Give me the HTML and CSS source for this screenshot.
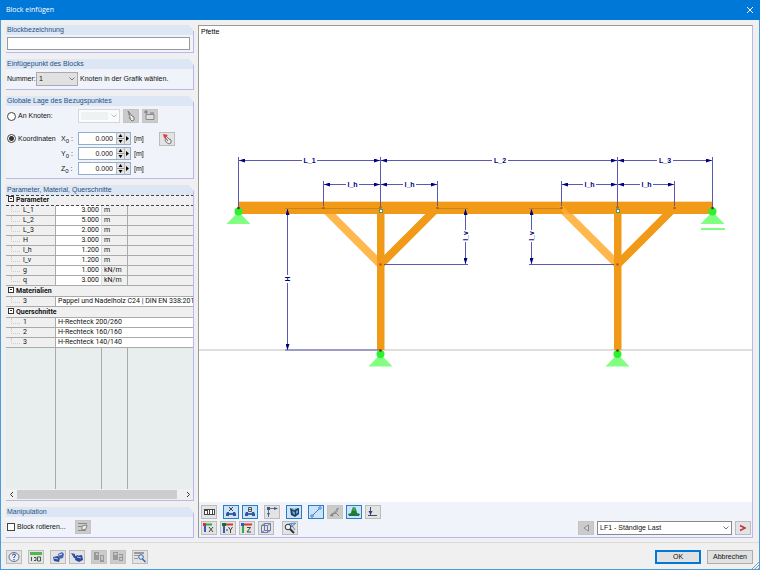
FILE: index.html
```html
<!DOCTYPE html>
<html lang="de">
  <head>
    <meta charset="UTF-8" />
    <meta name="viewport" content="width=device-width, initial-scale=1.0" />
    <title>Block einfügen</title>
    <link rel="stylesheet" href="styles.css">
  </head>
  <body>
    <div class="dialog">
      <header class="titlebar">
        <h1>Block einfügen</h1>
        <button type="button" class="close" aria-label="Schließen">
          <svg width="8" height="8" viewBox="0 0 8 8"><path d="M1 1l6 6M7 1L1 7" stroke="#fff" /></svg>
        </button>
      </header>

      <main class="content">
        <form class="sidebar">
          <section class="panel">
            <h2><label for="bezeichnung">Blockbezeichnung</label></h2>
            <div class="panel-body name-body">
              <input type="text" id="bezeichnung" name="bezeichnung" />
            </div>
          </section>

          <section class="panel">
            <h2>Einfügepunkt des Blocks</h2>
            <div class="panel-body row">
              <label for="nummer" class="nummer-label">Nummer:</label>
              <span class="select-box">
                <select id="nummer"><option>1</option></select>
                <svg class="chevron" width="6" height="4" viewBox="0 0 6 4"><path d="M0.5 0.5L3 3L5.5 0.5" /></svg>
              </span>
              <span>Knoten in der Grafik wählen.</span>
            </div>
          </section>

          <section class="panel">
            <h2>Globale Lage des Bezugspunktes</h2>
            <div class="panel-body position">
              <label class="choice wide"><input type="radio" name="lage" />An Knoten:</label>
              <div class="node-row">
                <span class="select-box disabled">
                  <select aria-label="Knoten" disabled><option></option></select>
                  <svg class="chevron" width="6" height="4" viewBox="0 0 6 4"><path d="M0.5 0.5L3 3L5.5 0.5" /></svg>
                </span>
                <button type="button" class="tool" disabled aria-label="Knoten wählen">
                  <svg width="14" height="12" viewBox="0 0 14 12"><path d="M4 1l4 5 2 1v3l-2 1-2-2-1-2 1-1z" fill="#eee" stroke="#777" /><path d="M4 3l3 6" stroke="#999" /></svg>
                </button>
                <button type="button" class="tool" disabled aria-label="Neuer Knoten">
                  <svg width="14" height="12" viewBox="0 0 14 12"><path d="M3 4.500h8v5h-8z" fill="#ddd" stroke="#888" /><path d="M1 2h4M3 0v4M7 3h4" stroke="#777" /></svg>
                </button>
              </div>

              <label class="choice"><input type="radio" name="lage" checked />Koordinaten</label>
              <label for="x0">X<sub>0</sub> :</label>
              <div class="spin">
                <input type="text" id="x0" value="0.000" />
                <button type="button" aria-label="X ändern"><svg width="7" height="9" viewBox="0 0 7 9"><path d="M3.500 0l2 3h-4zM3.500 9l2-3h-4z" /><path d="M0 4h7v1H0z" fill="#999" /></svg></button>
                <button type="button" aria-label="X Auswahl"><svg width="5" height="9" viewBox="0 0 5 9"><path d="M1 2l3 2.500L1 7z" /></svg></button>
              </div>
              <span>[m]</span>
              <button type="button" class="tool" aria-label="Punkt wählen">
                <svg width="14" height="12" viewBox="0 0 14 12"><path d="M6 3l3 3 2 1v3l-2 1-3-2-1-2z" fill="#eee" stroke="#777" /><path d="M3 1l5 1-4 3z" fill="#e33" /><path d="M5 4l3 4" stroke="#944" /></svg>
              </button>

              <label for="y0" class="second">Y<sub>0</sub> :</label>
              <div class="spin">
                <input type="text" id="y0" value="0.000" />
                <button type="button" aria-label="Y ändern"><svg width="7" height="9" viewBox="0 0 7 9"><path d="M3.500 0l2 3h-4zM3.500 9l2-3h-4z" /><path d="M0 4h7v1H0z" fill="#999" /></svg></button>
                <button type="button" aria-label="Y Auswahl"><svg width="5" height="9" viewBox="0 0 5 9"><path d="M1 2l3 2.500L1 7z" /></svg></button>
              </div>
              <span>[m]</span>

              <label for="z0" class="second">Z<sub>0</sub> :</label>
              <div class="spin">
                <input type="text" id="z0" value="0.000" />
                <button type="button" aria-label="Z ändern"><svg width="7" height="9" viewBox="0 0 7 9"><path d="M3.500 0l2 3h-4zM3.500 9l2-3h-4z" /><path d="M0 4h7v1H0z" fill="#999" /></svg></button>
                <button type="button" aria-label="Z Auswahl"><svg width="5" height="9" viewBox="0 0 5 9"><path d="M1 2l3 2.500L1 7z" /></svg></button>
              </div>
              <span>[m]</span>
            </div>
          </section>

          <section class="panel params">
            <h2>Parameter, Material, Querschnitte</h2>
            <table>
              <colgroup>
                <col class="c-name" /><col class="c-value" /><col class="c-unit" /><col />
              </colgroup>
              <tbody>
                <tr class="group selected"><th colspan="4"><i class="minus"></i>Parameter</th></tr>
                <tr><td>L_1</td><td>3.000</td><td>m</td><td></td></tr>
                <tr><td>L_2</td><td>5.000</td><td>m</td><td></td></tr>
                <tr><td>L_3</td><td>2.000</td><td>m</td><td></td></tr>
                <tr><td>H</td><td>3.000</td><td>m</td><td></td></tr>
                <tr><td>l_h</td><td>1.200</td><td>m</td><td></td></tr>
                <tr><td>l_v</td><td>1.200</td><td>m</td><td></td></tr>
                <tr><td>g</td><td>1.000</td><td>kN/m</td><td></td></tr>
                <tr><td>q</td><td>3.000</td><td>kN/m</td><td></td></tr>
                <tr class="group"><th colspan="4"><i class="minus"></i>Materialien</th></tr>
                <tr><td>3</td><td colspan="3" class="text">Pappel und Nadelholz C24 | DIN EN 338:201</td></tr>
                <tr class="group"><th colspan="4"><i class="minus"></i>Querschnitte</th></tr>
                <tr><td>1</td><td colspan="3" class="text">H-Rechteck 200/260</td></tr>
                <tr><td>2</td><td colspan="3" class="text">H-Rechteck 160/160</td></tr>
                <tr><td>3</td><td colspan="3" class="text">H-Rechteck 140/140</td></tr>
              </tbody>
            </table>
            <div class="empty-rows"><i></i><i></i><i></i><i></i></div>
            <div class="scrollbar">
              <svg width="11" height="11" viewBox="0 0 11 11"><path d="M7 3L4.500 5.500L7 8" /></svg>
              <div class="thumb"></div>
              <svg width="11" height="11" viewBox="0 0 11 11"><path d="M4 3l2.500 2.500L4 8" /></svg>
            </div>
          </section>

          <section class="panel">
            <h2>Manipulation</h2>
            <div class="panel-body row">
              <label class="choice rotate"><input type="checkbox" />Block rotieren...</label>
              <button type="button" class="tool" disabled aria-label="Rotation">
                <svg width="14" height="12" viewBox="0 0 14 12"><path d="M2 2.500h9M2 5.500h4M2 9.500h8" stroke="#888" /><path d="M6 5l5-1-1 4-4 1z" fill="#eee" stroke="#888" /></svg>
              </button>
            </div>
          </section>
        </form>

        <section class="viewer">
          <svg class="drawing" viewBox="199 26 553 475" role="img" aria-label="Pfette">
            <defs>
              <marker id="arrow" viewBox="0 0 6 4" markerWidth="6" markerHeight="4" refX="6" refY="2" orient="auto-start-reverse">
                <path d="M0 0L6 2L0 4z" fill="#000080" />
              </marker>
              <g id="support">
                <path d="M0 0L12 12.500H-12z" fill="#80ff80" />
                <circle r="4" fill="#2cf030" />
              </g>
            </defs>
            <text class="caption" x="201" y="34">Pfette</text>
            <path d="M199 350H753" stroke="#bdbdbd" />

            <!-- timber members -->
            <path d="M324 208L380 264M561 208L617 264" stroke="#ffb84d" stroke-width="8" />
            <path d="M437 208L381 264M674 208L618 264" stroke="#f19a18" stroke-width="8" />
            <path d="M238 202H713V214H238z" fill="#f19a18" />
            <path d="M238 201.500H713" stroke="#fbdcae" />
            <path d="M377 214h7.500v136H377zM614 214h7.500v136H614z" fill="#f19a18" />
            <path d="M559 207l4-1 7 8h-6z" fill="#ffaa2e" />

            <g class="beam-lines">
              <path d="M285 208.500H380M437 208.500H468M529 208.500H561" />
            </g>

            <g class="ext">
              <path d="M238.500 157V208M380.500 157V208M617.500 157V208M712.500 157V208" />
              <path d="M323.500 181V206M437.500 181V206M561.500 181V206M674.500 181V206" />
              <path d="M285 350H380M384 264.500H468M529 264.500H614" />
            </g>
            <g class="dim">
              <path d="M302 160.500H239" /><path d="M317 160.500H380" />
              <path d="M492 160.500H381" /><path d="M508 160.500H617" />
              <path d="M657 160.500H618" /><path d="M673 160.500H712" />
              <path d="M346 184.500H324" /><path d="M359 184.500H380" />
              <path d="M403 184.500H381" /><path d="M416 184.500H437" />
              <path d="M583 184.500H562" /><path d="M596 184.500H617" />
              <path d="M640 184.500H618" /><path d="M653 184.500H674" />
              <path d="M287.500 275V209" /><path d="M287.500 283V350" />
              <path d="M465.500 230V209" /><path d="M465.500 242V264" />
              <path d="M531.500 230V209" /><path d="M531.500 242V264" />
            </g>
            <g class="dim-text">
              <text x="309.500" y="163">L_1</text>
              <text x="500" y="163">L_2</text>
              <text x="665" y="163">L_3</text>
              <text x="352.500" y="187">l_h</text>
              <text x="409.500" y="187">l_h</text>
              <text x="589.500" y="187">l_h</text>
              <text x="646.500" y="187">l_h</text>
              <text transform="translate(290 279) rotate(-90)">H</text>
              <text transform="translate(468 236) rotate(-90)">l_v</text>
              <text transform="translate(534 236) rotate(-90)">l_v</text>
            </g>

            <use href="#support" x="238.500" y="211.500" />
            <use href="#support" x="712.500" y="211.500" />
            <path d="M701 229H725" stroke="#80ff80" stroke-width="2" />
            <use href="#support" x="380.500" y="354" />
            <use href="#support" x="617.500" y="354" />

            <g fill="#c8580c">
              <circle cx="323.500" cy="208" r="1.300" /><circle cx="437.500" cy="208" r="1.300" />
              <circle cx="561.500" cy="208" r="1.300" /><circle cx="674.500" cy="208" r="1.300" />
              <circle cx="380.500" cy="207.500" r="1.300" /><circle cx="617.500" cy="207.500" r="1.300" />
              <circle cx="380.500" cy="264.500" r="1.300" /><circle cx="617.500" cy="264.500" r="1.300" />
            </g>
            <g fill="#6b3010">
              <circle cx="238.500" cy="208" r="1.300" /><circle cx="712.500" cy="208" r="1.300" />
              <circle cx="380.500" cy="350.500" r="1.300" /><circle cx="617.500" cy="350.500" r="1.300" />
            </g>
            <g fill="#fff" stroke="#3c9688">
              <rect x="379.500" y="209.500" width="3" height="3" /><rect x="616.500" y="209.500" width="3" height="3" />
            </g>
          </svg>

          <div class="view-tools">
            <div class="tool-row">
              <button type="button" class="tool" aria-label="Bemaßung">
                <svg width="14" height="12" viewBox="0 0 14 12"><path d="M2 3h11v6H2z" fill="#444" /><path d="M3 5h2v3H3zM6 4h1v4H6zM8 4h2v4H8zM11 4h1v4h-1z" fill="#fff" /></svg>
              </button>
              <button type="button" class="tool on split" aria-label="Parameternamen">
                <svg width="14" height="12" viewBox="0 0 14 12"><path d="M3 8h8" stroke="#4466a8" stroke-width="2" /><path d="M2 8l1-2h2v4H2zM12 8l-1-2H9v4h3z" fill="#35559a" /><path d="M5 1l4 4M9 1L5 5" stroke="#444" /></svg>
              </button>
              <button type="button" class="tool on" aria-label="Parameterwerte">
                <svg width="14" height="12" viewBox="0 0 14 12"><path d="M3 8h8" stroke="#4466a8" stroke-width="2" /><path d="M2 8l1-2h2v4H2zM12 8l-1-2H9v4h3z" fill="#35559a" /><path d="M5.500 1.500h3v4h-3zM5 3.500h4" stroke="#555" fill="none" /></svg>
              </button>
              <button type="button" class="tool split" aria-label="Achsen">
                <svg width="14" height="12" viewBox="0 0 14 12"><path d="M3.500 11V2.500H12" stroke="#5c7499" fill="none" /><path d="M2 1h3v3H2zM9 1l4 1.500L9 4zM2 7h3l-1.500 3z" fill="#41597d" /></svg>
              </button>
              <button type="button" class="tool on split" aria-label="Modell">
                <svg width="14" height="12" viewBox="0 0 14 12"><path d="M3 2l4 1 5-1v6l-4 3-4-2z" fill="#1d3f66" /><path d="M5 5l3 1v3L6 8zM9 5l2-1v3L9 8z" fill="#5fa4d8" /><path d="M4 2l3 2 3-2" stroke="#9bc" fill="none" /></svg>
              </button>
              <button type="button" class="tool on split" aria-label="Stäbe">
                <svg width="14" height="12" viewBox="0 0 14 12"><path d="M3 10L11 2" stroke="#3d78d8" /><path d="M2 9h2v2H2zM10 1h2v2h-2z" fill="#fff" stroke="#4a7fd0" /></svg>
              </button>
              <button type="button" class="tool" disabled aria-label="Gelenke">
                <svg width="14" height="12" viewBox="0 0 14 12"><path d="M2 10L11 2M4 8l5-1M9 2v4M7 6l4 4" stroke="#888" fill="none" /><circle cx="4" cy="9" r="1.500" fill="#888" /></svg>
              </button>
              <button type="button" class="tool on" aria-label="Lager">
                <svg width="14" height="12" viewBox="0 0 14 12"><path d="M5 3h4l1 4 3 1-1 2H2L1 8l3-1z" fill="#1d7a3c" /><ellipse cx="7" cy="3" rx="2" ry="2" fill="#3aa457" /></svg>
              </button>
              <button type="button" class="tool" aria-label="Lasten">
                <svg width="14" height="12" viewBox="0 0 14 12"><path d="M4.500 1v8M2 9.500h9" stroke="#444d66" /><path d="M2.500 5h4L4.500 9z" fill="#2c3f80" /></svg>
              </button>
            </div>

            <div class="tool-row">
              <button type="button" class="tool" aria-label="Ansicht X">
                <svg width="14" height="12" viewBox="0 0 14 12"><path d="M3 2.500h7" stroke="#2dab45" stroke-width="2" /><path d="M3 3v7" stroke="#3558c8" stroke-width="2" /><path d="M1 1h3v3H1z" fill="#c33" /><path d="M7 5l4 5M11 5l-4 5" stroke="#444" /></svg>
              </button>
              <button type="button" class="tool" aria-label="Ansicht -Y">
                <svg width="14" height="12" viewBox="0 0 14 12"><path d="M3 2.500h9" stroke="#d23b3b" stroke-width="2" /><path d="M3 3v8" stroke="#3558c8" stroke-width="2" /><path d="M1 1h4v3H1z" fill="#18702b" /><path d="M5 8h2M7.500 5l2 3 2-3M9.500 8v3" stroke="#444" fill="none" /></svg>
              </button>
              <button type="button" class="tool" aria-label="Ansicht Z">
                <svg width="14" height="12" viewBox="0 0 14 12"><path d="M3 2.500h9" stroke="#d23b3b" stroke-width="2" /><path d="M3 3v8" stroke="#2dab45" stroke-width="2" /><path d="M1 1h3v3H1z" fill="#3558c8" /><path d="M7 5.500h3.500L7 10h4" stroke="#444" fill="none" /></svg>
              </button>
              <button type="button" class="tool" aria-label="Isometrie">
                <svg width="14" height="12" viewBox="0 0 14 12"><path d="M2.500 3.500h6v7h-6zM5.500 1.500h6v7h-6zM2.500 3.500l3-2M8.500 3.500l3-2M8.500 10.500l3-2M2.500 10.500l3-2" stroke="#6c7ba8" fill="none" /></svg>
              </button>
              <button type="button" class="tool split-wide" aria-label="Alles zeigen">
                <svg width="14" height="12" viewBox="0 0 14 12"><path d="M8 5l5-4M8 2l4 6M6 2l6-1" stroke="#4d80c8" fill="none" /><circle cx="5" cy="5" r="2.800" fill="#e8f0fa" stroke="#333" /><path d="M7 7l4 4" stroke="#333" stroke-width="2" /></svg>
              </button>
              <div class="loadcase">
                <button type="button" class="tool" disabled aria-label="Vorheriger Lastfall">
                  <svg width="14" height="12" viewBox="0 0 14 12"><path d="M9.500 3L5 6L9.500 9z" fill="#ddd" stroke="#888" /></svg>
                </button>
                <span class="select-box light">
                  <select aria-label="Lastfall"><option>LF1 - Ständige Last</option></select>
                  <svg class="chevron" width="6" height="4" viewBox="0 0 6 4"><path d="M0.5 0.5L3 3L5.5 0.5" /></svg>
                </span>
                <button type="button" class="tool" aria-label="Nächster Lastfall">
                  <svg width="14" height="12" viewBox="0 0 14 12"><path d="M4 3.500L9 6L4 8.500" stroke="#c43040" stroke-width="1.500" fill="none" /></svg>
                </button>
              </div>
            </div>
          </div>
        </section>
      </main>

      <footer class="footer">
        <button type="button" class="tool" aria-label="Hilfe">
          <svg width="14" height="12" viewBox="0 0 14 12"><ellipse cx="7" cy="6" rx="5" ry="4.500" fill="#e8edf6" stroke="#69758c" /><path d="M5.500 4.500q0-1.500 1.500-1.500t1.500 1.300q0 1-1.500 1.700v1M7 8v1.200" stroke="#24438f" fill="none" /></svg>
        </button>
        <button type="button" class="tool split" aria-label="Einheiten">
          <svg width="14" height="12" viewBox="0 0 14 12"><path d="M1 1h12v3H1z" fill="#52b552" /><path d="M1 4h12v7H1z" fill="#e0e6de" /><path d="M2.500 6v4M5 6.500h2v3H5M8.500 6h3v4h-3z" stroke="#455" fill="none" /></svg>
        </button>
        <button type="button" class="tool split" aria-label="Block laden">
          <svg width="14" height="12" viewBox="0 0 14 12"><path d="M2 6l5-1 2 2-1 4-5-1z" fill="#2b4a9f" /><path d="M7 3l4-2 2 2-1 4-4 1z" fill="#4567b5" /><path d="M3 7l4 1" stroke="#b9cdf2" /><path d="M8 4l3-1" stroke="#dbe6ff" /></svg>
        </button>
        <button type="button" class="tool" aria-label="Block speichern">
          <svg width="14" height="12" viewBox="0 0 14 12"><path d="M1 2l4 1v2l3-1-1 4-3-1z" fill="#3155a5" /><path d="M6 5l6-1 1 5-4 2-4-2z" fill="#2b4a9f" /><path d="M7 6l4 1" stroke="#b9cdf2" /></svg>
        </button>
        <button type="button" class="tool split" disabled aria-label="Kopieren">
          <svg width="14" height="12" viewBox="0 0 14 12"><path d="M2 1h5v8H2zM8 4h4v7H8z" fill="#999" /><path d="M4 3h2M9 6h2M9 8h2" stroke="#eee" /></svg>
        </button>
        <button type="button" class="tool" disabled aria-label="Einfügen">
          <svg width="14" height="12" viewBox="0 0 14 12"><path d="M2 1h5v8H2zM8 3h4v7H8z" fill="#999" /><path d="M3 3h3M8 5h3M9 8h2" stroke="#eee" /></svg>
        </button>
        <button type="button" class="tool split" aria-label="Details">
          <svg width="14" height="12" viewBox="0 0 14 12"><path d="M1 1h10v2H1zM1 4h5v1H1zM1 7h4v1H1z" fill="#999" /><circle cx="8" cy="6" r="2.300" fill="#dceaf8" stroke="#3c64a8" /><path d="M9.500 8l3 3" stroke="#3c64a8" stroke-width="1.500" /></svg>
        </button>
        <div class="actions">
          <button type="button" class="btn primary">OK</button>
          <button type="button" class="btn">Abbrechen</button>
        </div>
        <svg class="grip" width="7" height="7" viewBox="0 0 7 7"><path d="M0 7L7 0M3 7L7 3M6 7L7 6" stroke="#999" /></svg>
      </footer>
    </div>
  </body>
</html>
```

FILE: styles.css
```css
* {
  box-sizing: border-box;
}
body {
  margin: 0;
  font-family: "Liberation Sans", Arial, sans-serif;
  font-size: 7px;
  line-height: 10px;
  color: #111;
}
button,
input,
select {
  font: inherit;
  color: inherit;
  margin: 0;
}
svg {
  display: block;
}
.dialog {
  display: flex;
  flex-direction: column;
  min-height: 100vh;
  background-color: #f0f0f0;
  border: 1px solid #4a9ce0;
  border-top: 0;
}
.titlebar {
  display: flex;
  justify-content: space-between;
  align-items: center;
  height: 20px;
  margin: 0 -1px;
  padding: 0 6px;
  background-color: #0078d7;
}
.titlebar h1 {
  margin: 0;
  font-family: "Open Sans", sans-serif;
  font-size: 7px;
  font-weight: normal;
  color: #fff;
}
.close {
  display: flex;
  padding: 0;
  border: 0;
  background: none;
}
.content {
  flex: 1;
  display: grid;
  grid-template-columns: 188px 1fr;
  gap: 4px;
  padding: 5px 6px 4px 5px;
}
.sidebar {
  display: flex;
  flex-direction: column;
  gap: 6px;
}

/* panels */
.panel {
  position: relative;
  background-color: #f0f4fa;
  border-bottom: 1px solid #b8b8ee;
}
.panel::after {
  content: "";
  position: absolute;
  top: 6px;
  right: 0;
  bottom: 0;
  width: 1px;
  background-color: #b8b8ee;
}
.panel h2 {
  height: 10px;
  margin: 0;
  padding-left: 1px;
  font-size: 7px;
  font-weight: normal;
  color: #26507f;
  background: linear-gradient(225deg, #f0f0f0 4px, #dce6f4 4px);
}
.panel-body {
  padding: 3px 3px 3px 1px;
}
.name-body {
  padding: 2px 4px 2px 1px;
}
.name-body input {
  display: block;
  width: 100%;
  height: 13px;
  padding: 0 2px;
  border: 1px solid #999;
  background-color: #fff;
}
.row {
  display: flex;
  align-items: center;
  gap: 2px;
}
.nummer-label {
  width: 27px;
}
.select-box {
  position: relative;
  width: 42px;
}
.select-box select {
  display: block;
  appearance: none;
  width: 100%;
  height: 14px;
  padding: 0 2px;
  border: 1px solid #aaa;
  border-radius: 0;
  background-color: #e1e1e1;
}
.select-box.light select {
  background-color: #fff;
  border-color: #888;
}
.select-box.disabled select {
  border-color: #ccc;
  background-color: #fff;
  box-shadow: inset 0 0 0 2px #fff;
  background-image: linear-gradient(90deg, #f0f0f0 29px, #fff 29px);
}
.chevron {
  position: absolute;
  right: 3px;
  top: 5px;
  fill: none;
  stroke: #777;
  pointer-events: none;
}
.disabled .chevron {
  stroke: #bbb;
}
.position {
  display: grid;
  grid-template-columns: 54px 17px 53px 9px 1fr;
  grid-template-rows: 22px;
  grid-auto-rows: 15px;
  align-items: center;
  padding-bottom: 2px;
}
.position > span {
  text-align: right;
  padding-left: 3px;
}
.position > .tool {
  margin-left: 19px;
}
.position .second {
  grid-column: 2;
}
.wide {
  grid-column: span 2;
}
.wide,
.node-row {
  align-self: start;
}
.node-row {
  grid-column: span 3;
  display: flex;
  gap: 3px;
}
.position sub {
  font-size: 6px;
  line-height: 0;
}
.choice {
  display: flex;
  align-items: center;
  gap: 2px;
  min-height: 14px;
  white-space: nowrap;
}
.choice input {
  appearance: none;
  width: 8px;
  height: 8px;
  border: 1px solid #444;
  background-color: #fff;
}
.choice input[type="radio"] {
  width: 9px;
  height: 9px;
  border-radius: 50%;
}
.choice input[type="radio"]:checked {
  background: radial-gradient(#333 0 2px, #fff 3px);
}
.rotate {
  width: 66px;
}
.spin {
  display: flex;
  height: 13px;
  border: 1px solid #93aecb;
  background-color: #fff;
}
.spin input {
  flex: 1;
  min-width: 0;
  padding: 0 3px;
  border: 0;
  background: none;
  text-align: right;
}
.spin button {
  display: flex;
  align-items: center;
  padding: 0;
  border: 0;
  border-left: 1px solid #bbb;
  background-color: #e4e4e4;
}

/* parameter table */
.params {
  flex: 1;
  display: flex;
  flex-direction: column;
}
table {
  table-layout: fixed;
  width: 100%;
  border-collapse: separate;
  border-spacing: 0;
  font-family: Roboto, Arial, sans-serif;
}
.c-name {
  width: 50px;
}
.c-value {
  width: 46px;
}
.c-unit {
  width: 26px;
}
td,
th {
  height: 10px;
  padding: 0 2px;
  line-height: 9px;
  border-right: 1px solid #aaa;
  border-bottom: 1px solid #aaa;
  background-color: #f0f0f0;
  white-space: nowrap;
}
td:last-child,
th {
  border-right: 0;
}
td:first-child {
  position: relative;
  padding-left: 17px;
}
td:first-child::before {
  content: "";
  position: absolute;
  left: 5px;
  top: 0;
  width: 8px;
  height: 5px;
  border-left: 1px dotted #ccc;
  border-bottom: 1px dotted #ccc;
}
td:nth-child(2) {
  text-align: right;
  background-color: #fff;
  border-right-color: #ddd;
}
td.text {
  padding-right: 0;
  text-align: left;
}
th {
  height: 11px;
  text-align: left;
}
.selected th {
  border-top: 1px dashed #444;
  border-bottom: 1px dashed #444;
}
.minus {
  display: inline-block;
  width: 6px;
  height: 6px;
  margin-right: 2px;
  border: 1px solid #333;
  background: linear-gradient(#333, #333) 1px 1px / 2px 1px no-repeat #fff;
}
.empty-rows {
  flex: 1;
  display: grid;
  grid-template-columns: 50px 46px 26px 1fr;
  background-color: #e8eeee;
}
.empty-rows i {
  border-right: 1px solid #aaa;
}
.scrollbar {
  display: flex;
  height: 11px;
  background-color: #f0f0f0;
}
.scrollbar path {
  fill: none;
  stroke: #333;
}
.thumb {
  flex: 1;
  margin: 1px 6px 1px 0;
  background-color: #cdcdcd;
}

/* icon buttons */
.tool {
  display: flex;
  justify-content: center;
  align-items: center;
  flex: none;
  width: 16px;
  height: 14px;
  padding: 0;
  border: 1px solid #bcbcbc;
  background-color: #e3e3e3;
}
.tool:disabled {
  border-color: #c4c4c4;
  background-color: #cbcbcb;
}
.tool.on {
  border-color: #2a7cc8;
  background-color: #cce4f7;
}
.split {
  margin-left: 3px;
}
.split-wide {
  margin-left: 5px;
}

/* drawing area */
.viewer {
  display: flex;
  flex-direction: column;
  border: 1px solid #b8b8ee;
  border-top-color: #999;
  border-left-color: #999;
  background-color: #fff;
}
.drawing {
  width: 100%;
  margin-bottom: auto;
}
.caption {
  font-size: 7px;
}
.ext {
  fill: none;
  stroke: #5a5ab0;
}
.beam-lines {
  fill: none;
  stroke: #c88420;
}
.dim path {
  stroke: #5a5ab0;
  marker-end: url(#arrow);
}
.dim-text {
  font-size: 7px;
  font-weight: bold;
  fill: #000080;
  text-anchor: middle;
}
.view-tools {
  display: flex;
  flex-direction: column;
  gap: 2px;
  padding: 3px 1px 2px 2px;
  background-color: #f0f4fa;
}
.tool-row {
  display: flex;
  gap: 3px;
}
.loadcase {
  display: flex;
  gap: 3px;
  margin-left: auto;
}
.loadcase .select-box {
  width: 135px;
}

.footer {
  position: relative;
  display: flex;
  align-items: center;
  gap: 3px;
  padding: 7px 6px 5px 5px;
  border-top: 1px solid #dadada;
}
.actions {
  display: flex;
  gap: 6px;
  margin-left: auto;
}
.btn {
  width: 46px;
  height: 14px;
  padding: 0;
  border: 1px solid #adadad;
  background-color: #e1e1e1;
}
.btn.primary {
  border-color: #0078d7;
  outline: 1px solid #0078d7;
  outline-offset: -2px;
}
.grip {
  position: absolute;
  right: 0;
  bottom: 0;
}
```
